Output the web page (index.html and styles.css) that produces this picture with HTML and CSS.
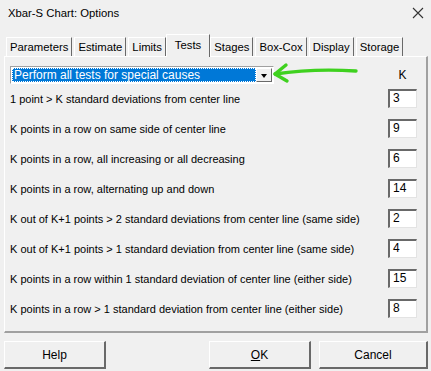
FILE: index.html
```html
<!DOCTYPE html>
<html>
<head>
<meta charset="utf-8">
<link rel="stylesheet" href="styles.css">
</head>
<body>
<div class="dialog">
  <div class="titlebar">
    <span class="title">Xbar-S Chart: Options</span>
    <svg class="close" width="12" height="12" viewBox="0 0 12 12"><path d="M1 1 L11 11 M11 1 L1 11" stroke="#333" stroke-width="1.1" fill="none"/></svg>
  </div>
  <div class="tabs">
    <div class="tab">Parameters</div>
    <div class="tab">Estimate</div>
    <div class="tab">Limits</div>
    <div class="tab active">Tests</div>
    <div class="tab">Stages</div>
    <div class="tab">Box-Cox</div>
    <div class="tab">Display</div>
    <div class="tab">Storage</div>
  </div>
  <div class="panel">
    <div class="head">
      <div class="combo">
        <div class="combo-sel">Perform all tests for special causes</div>
        <div class="combo-btn"><span class="tri"></span></div>
      </div>
      <div class="khead">K</div>
    </div>
    <div class="rows">
      <div class="row"><span>1 point &gt; K standard deviations from center line</span><div class="inp">3</div></div>
      <div class="row"><span>K points in a row on same side of center line</span><div class="inp">9</div></div>
      <div class="row"><span>K points in a row, all increasing or all decreasing</span><div class="inp">6</div></div>
      <div class="row"><span>K points in a row, alternating up and down</span><div class="inp">14</div></div>
      <div class="row"><span>K out of K+1 points &gt; 2 standard deviations from center line (same side)</span><div class="inp">2</div></div>
      <div class="row"><span>K out of K+1 points &gt; 1 standard deviation from center line (same side)</span><div class="inp">4</div></div>
      <div class="row"><span>K points in a row within 1 standard deviation of center line (either side)</span><div class="inp">15</div></div>
      <div class="row"><span>K points in a row &gt; 1 standard deviation from center line (either side)</span><div class="inp">8</div></div>
    </div>
    <svg class="annot" width="90" height="22" viewBox="0 0 90 22">
      <path d="M5 12 C 25 9, 55 7, 86 9" stroke="#3fd11f" stroke-width="3.4" fill="none" stroke-linecap="round"/>
      <path d="M16 3 L 5 12 L 17 19" stroke="#3fd11f" stroke-width="3.4" fill="none" stroke-linecap="round" stroke-linejoin="round"/>
    </svg>
  </div>
  <div class="footer">
    <div class="btn help">Help</div>
    <div class="spacer"></div>
    <div class="btn ok"><u>O</u>K</div>
    <div class="btn cancel">Cancel</div>
  </div>
</div>
</body>
</html>
```
FILE: styles.css
```css
html, body {
  margin: 0;
  padding: 0;
  background: #f0f0f0;
}
body {
  font-family: "Liberation Sans", Arial, sans-serif;
  font-size: 11px;
  color: #000;
  width: 431px;
  height: 371px;
  overflow: hidden;
}
.dialog {
  width: 431px;
  height: 371px;
  display: flex;
  flex-direction: column;
}
.titlebar {
  height: 31px;
  display: flex;
  align-items: center;
  justify-content: space-between;
  padding: 0 7px 0 8px;
  box-sizing: border-box;
  font-size: 11.3px;
}
.title {
  margin-top: -6px;
}
.close {
  margin-top: -6px;
}
.tabs {
  display: flex;
  align-items: flex-end;
  height: 25px;
  padding-left: 6px;
  box-sizing: border-box;
  position: relative;
  z-index: 1;
}
.tab {
  height: 19px;
  padding: 0 3px;
  display: flex;
  align-items: center;
  box-sizing: border-box;
  border-top: 1px solid #fff;
  border-left: 1px solid #fff;
  border-right: 1px solid #696969;
  margin-right: 2px;
  white-space: nowrap;
  font-size: 11.3px;
}
.tab.active {
  height: 23px;
  margin-bottom: -1px;
  background: #f0f0f0;
  padding: 0 8px 3px;
  margin-left: -2px;
  margin-right: 0;
}
.panel {
  position: relative;
  margin: 0 3px 0 4px;
  height: 277px;
  box-sizing: border-box;
  border-top: 1px solid #fff;
  border-left: 1px solid #fff;
  border-right: 2px solid #a0a0a0;
  border-bottom: 2px solid #a0a0a0;
  padding: 9px 9px 0 5px;
}
.head {
  display: flex;
  align-items: center;
  justify-content: space-between;
  height: 18px;
}
.combo {
  width: 264px;
  height: 18px;
  box-sizing: border-box;
  border-top: 1px solid #a0a0a0;
  border-left: 1px solid #a0a0a0;
  border-bottom: 1px solid #fff;
  border-right: 1px solid #fff;
  background: #fff;
  display: flex;
  padding: 1px;
}
.combo-sel {
  flex: 1;
  background: #0078d7;
  color: #fff;
  font-size: 12px;
  line-height: 14px;
  padding-left: 2px;
  outline: 1px dotted #fff;
  outline-offset: -1px;
}
.combo-btn {
  width: 16px;
  background: #f0f0f0;
  box-sizing: border-box;
  border-right: 1px solid #696969;
  border-bottom: 1px solid #696969;
  border-top: 1px solid #fff;
  border-left: 1px solid #fff;
  display: flex;
  align-items: center;
  justify-content: center;
}
.tri {
  width: 0;
  height: 0;
  border-left: 3.5px solid transparent;
  border-right: 3.5px solid transparent;
  border-top: 4px solid #000;
  margin-top: 2px;
}
.khead {
  width: 29px;
  text-align: center;
  font-size: 12px;
}
.rows {
  display: flex;
  flex-direction: column;
  gap: 11px;
  margin-top: 5px;
}
.row {
  height: 19px;
  display: flex;
  align-items: center;
  justify-content: space-between;
  font-size: 11px;
}
.inp {
  width: 29px;
  height: 19px;
  box-sizing: border-box;
  background: #fff;
  border-top: 2px solid #696969;
  border-left: 2px solid #696969;
  border-bottom: 1px solid #e3e3e3;
  border-right: 1px solid #e3e3e3;
  padding-left: 3px;
  font-size: 12px;
  line-height: 15px;
}
.annot {
  position: absolute;
  left: 265px;
  top: 5px;
}
.footer {
  display: flex;
  padding: 8px 3px 0 4px;
  gap: 8px;
}
.spacer {
  flex: 1;
}
.btn {
  width: 102px;
  height: 28px;
  box-sizing: border-box;
  background: #f0f0f0;
  border-top: 1px solid #fff;
  border-left: 1px solid #fff;
  border-right: 2px solid #696969;
  border-bottom: 2px solid #696969;
  display: flex;
  align-items: center;
  justify-content: center;
  font-size: 12px;
}
.btn.cancel {
  width: 109px;
}
u {
  text-decoration: underline;
}
```
